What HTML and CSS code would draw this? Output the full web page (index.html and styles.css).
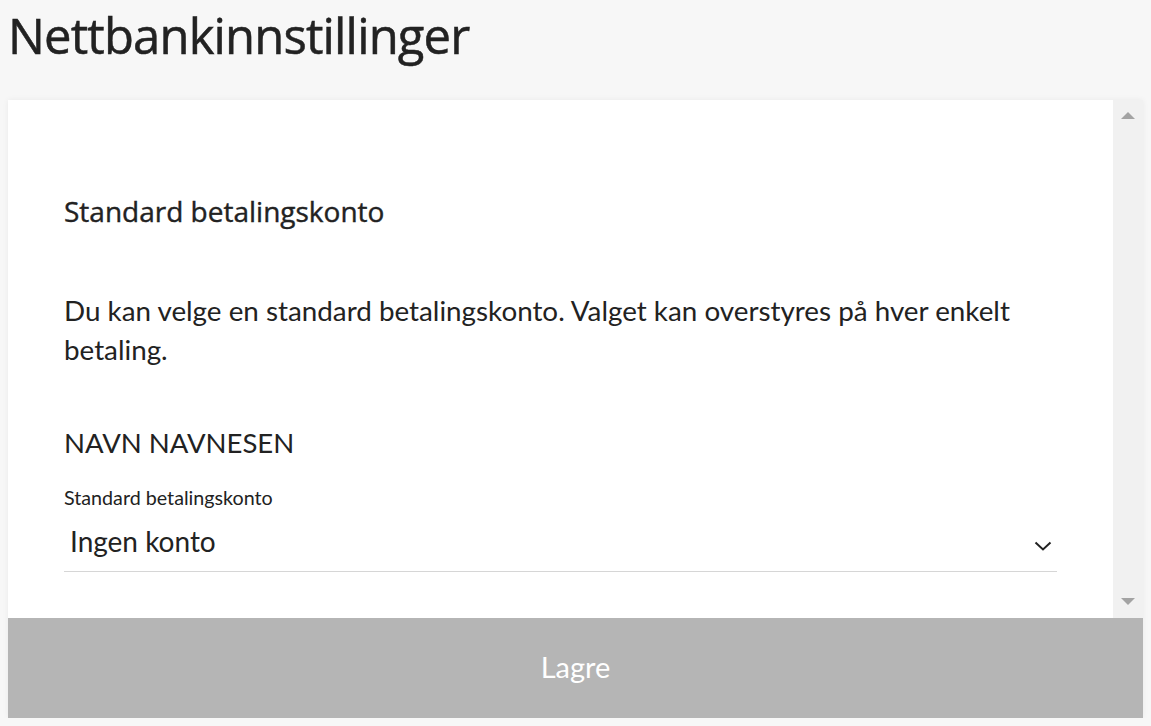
FILE: index.html
```html
<!doctype html>
<html>

<head>
    <title>Nettbankinnstillinger</title>
    <link rel="stylesheet" href="styles.css">
</head>

<body>
    <h1 class="PageTitle">Nettbankinnstillinger</h1>
    <div class="SettingsCard">
        <div class="SettingsScroll">
            <div class="SettingsContent">
                <h2 class="SectionTitle">Standard betalingskonto</h2>
                <p class="SectionText">Du kan velge en standard betalingskonto. Valget kan overstyres på hver enkelt
                    betaling.</p>
                <div class="OwnerName">NAVN NAVNESEN</div>
                <div class="Field">
                    <div class="FieldLabel">Standard betalingskonto</div>
                    <div class="FieldSelect">
                        <span class="FieldValue">Ingen konto</span>
                        <svg class="Chevron" width="18" height="10" viewBox="0 0 18 10">
                            <polyline points="1.5,1.5 9,8.5 16.5,1.5" fill="none" stroke="#222" stroke-width="2" />
                        </svg>
                    </div>
                </div>
            </div>
            <div class="Scrollbar">
                <span class="ScrollArrow up"></span>
                <span class="ScrollArrow down"></span>
            </div>
        </div>
        <button class="SaveButton">Lagre</button>
    </div>
</body>

</html>
```

FILE: styles.css
```css
html,
body {
    background-color: #f7f7f7;
}

body {
    margin: 0;
    padding: 0 8px;
    color: #222;
    font-family: Lato, "Open Sans", sans-serif;
}

.PageTitle {
    font-family: "Open Sans", sans-serif;
    font-size: 49px;
    font-weight: 400;
    letter-spacing: -0.85px;
    -webkit-text-stroke: 0.5px #222;
    line-height: 64px;
    margin: 3px 0 33px;
}

.SettingsCard {
    background: #fff;
    box-shadow: 0 0 6px rgba(0, 0, 0, 0.06);
}

.SettingsScroll {
    display: flex;
    height: 518px;
    overflow: hidden;
}

.SettingsContent {
    flex: 1;
    padding: 92px 56px 0;
}

.SectionTitle {
    font-family: "Open Sans", sans-serif;
    font-size: 28px;
    font-weight: 400;
    -webkit-text-stroke: 0.4px #222;
    line-height: 38px;
    margin: 0;
}

.SectionText {
    font-size: 27.8px;
    line-height: 39px;
    margin: 61px 0 0;
}

.OwnerName {
    font-size: 27.5px;
    line-height: 40px;
    margin-top: 54px;
}

.Field {
    margin-top: 22px;
}

.FieldLabel {
    font-size: 19.7px;
    line-height: 26px;
}

.FieldSelect {
    display: flex;
    align-items: center;
    justify-content: space-between;
    height: 61px;
    box-sizing: border-box;
    padding: 0 5px 0 6px;
    border-bottom: 1px solid #d6d6d6;
}

.FieldValue {
    font-size: 28px;
}

.Chevron {
    display: block;
    margin-top: 10px;
}

.Scrollbar {
    width: 30px;
    background: #f1f1f1;
    display: flex;
    flex-direction: column;
    justify-content: space-between;
    align-items: center;
    padding: 12px 0 13px;
    box-sizing: border-box;
}

.ScrollArrow {
    width: 0;
    height: 0;
    border-left: 7px solid transparent;
    border-right: 7px solid transparent;
}

.ScrollArrow.up {
    border-bottom: 7px solid #a3a3a3;
}

.ScrollArrow.down {
    border-top: 7px solid #a3a3a3;
}

.SaveButton {
    display: block;
    width: 100%;
    height: 100px;
    padding: 0 0 4px;
    border: 0;
    background: #b5b5b5;
    color: #fff;
    font-family: Lato, sans-serif;
    font-size: 29px;
}
```
